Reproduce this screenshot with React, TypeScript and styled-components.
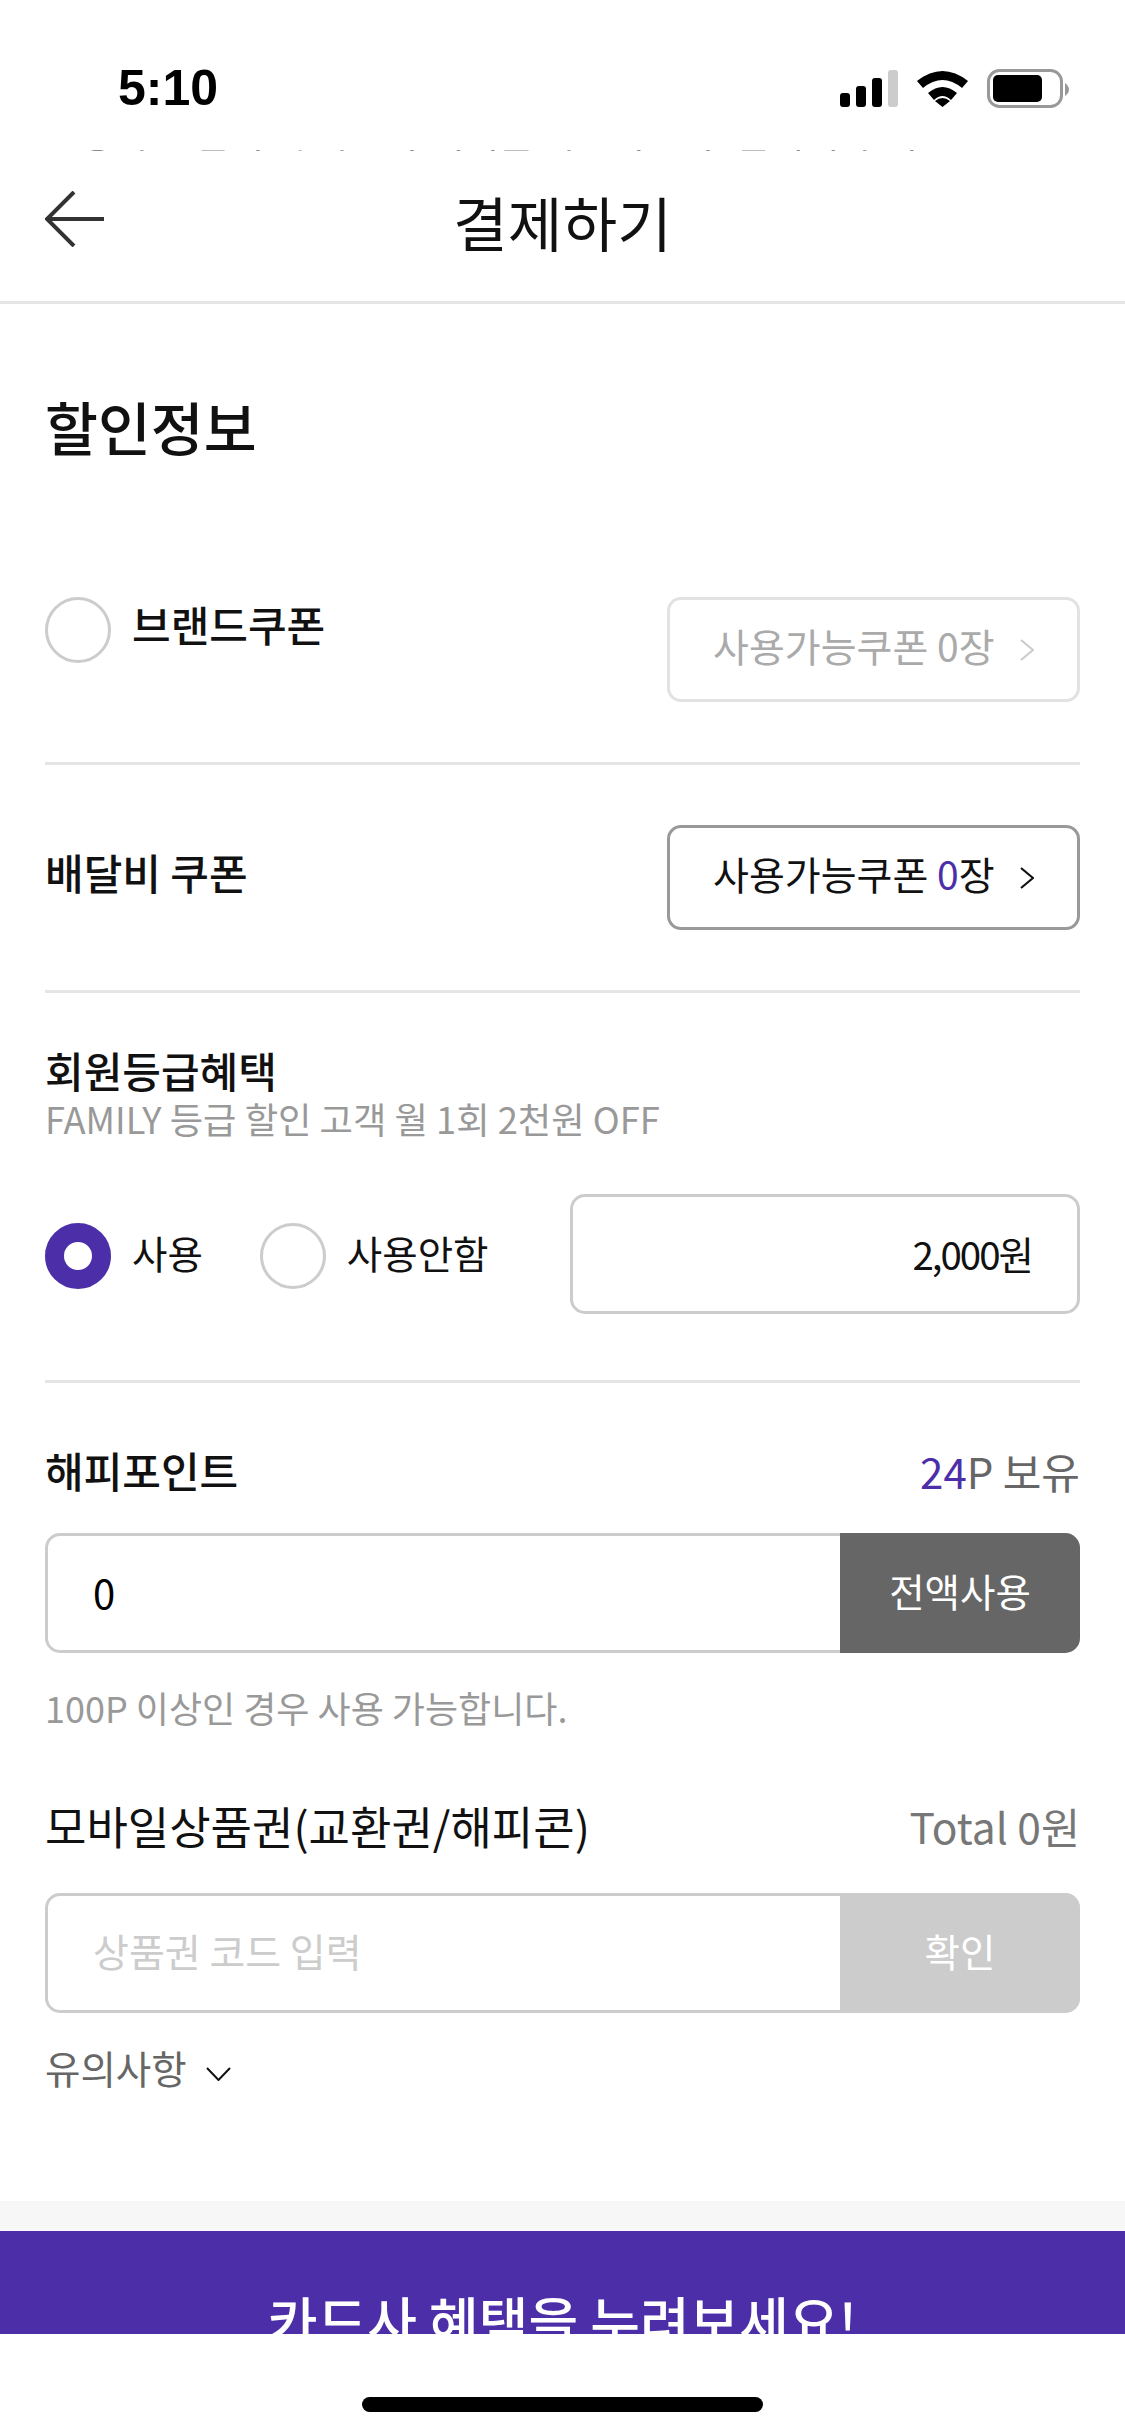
import React from "react";
import styled, { createGlobalStyle } from "styled-components";

const purple = "#4c2fa8";
const kr = `"Noto Sans CJK KR", "Noto Sans", sans-serif`;

const Reset = createGlobalStyle`
  html, body { margin: 0; padding: 0; background: #fff; }
  * { box-sizing: border-box; }
`;

const Screen = styled.div`
  width: 1125px;
  height: 2436px;
  overflow: hidden;
  background: #fff;
  display: flex;
  flex-direction: column;
  font-family: ${kr};
  color: #111;
`;

const StatusBar = styled.div`
  height: 150px;
  padding: 62px 56px 0 118px;
  display: flex;
  justify-content: space-between;
  align-items: flex-start;
`;

const Clock = styled.div`
  font-family: "Liberation Sans", Arial, sans-serif;
  font-weight: 700;
  font-size: 50px;
  line-height: 52px;
  color: #000;
`;

const ScrollPeek = styled.div`
  height: 2px;
  padding: 0 45px;
  overflow: hidden;
  display: flex;
  align-items: flex-end;
  font-size: 38px;
  line-height: 42px;
  white-space: nowrap;
  color: #888;
`;

const HeaderBar = styled.header`
  height: 152px;
  padding: 0 45px;
  border-bottom: 3px solid #e5e5e5;
  display: grid;
  grid-template-columns: 1fr auto 1fr;
  align-items: center;
`;

const BackIcon = styled.svg`
  width: 59px;
  height: 56px;
  margin-bottom: 15px;
  display: block;
`;

const PageTitle = styled.h1`
  margin: 0;
  padding-bottom: 12px;
  font-size: 59.5px;
  line-height: 70px;
  font-weight: 400;
  color: #111;
`;

const Body = styled.main`
  padding: 96px 45px 106px 45px;
  display: flex;
  flex-direction: column;
`;

const SectionTitle = styled.h2`
  margin: 0 0 137px;
  padding-bottom: 8px;
  font-size: 57.5px;
  line-height: 52px;
  font-weight: 500;
`;

const Divider = styled.div`
  height: 3px;
  background: #e5e5e5;
`;

const CouponRow = styled.div<{ $top?: boolean }>`
  height: 105px;
  margin: ${(p) => (p.$top ? "0 0 60px" : "60px 0")};
  display: flex;
  justify-content: space-between;
  align-items: ${(p) => (p.$top ? "flex-start" : "center")};
`;

const RadioLabel = styled.label`
  display: flex;
  align-items: center;
  gap: 21px;
`;

const Radio = styled.span<{ $checked?: boolean }>`
  width: 66px;
  height: 66px;
  flex: none;
  border-radius: 50%;
  background: #fff;
  border: ${(p) => (p.$checked ? `19px solid ${purple}` : "3px solid #ccc")};
`;

const Label = styled.span<{ $lift?: number }>`
  font-size: 42px;
  line-height: ${(p) => 60 - 2 * (p.$lift ?? 6)}px;
  padding-bottom: ${(p) => 2 * (p.$lift ?? 6)}px;
  font-weight: 500;
  color: #111;
`;

const RadioText = styled.span`
  font-size: 38.5px;
  line-height: 52px;
  padding-bottom: 8px;
  color: #111;
`;

const CouponButton = styled.div<{ $disabled?: boolean }>`
  width: 413px;
  height: 105px;
  padding: 0 43px 0 43px;
  border: 3px solid ${(p) => (p.$disabled ? "#e2e2e2" : "#999")};
  border-radius: 14px;
  display: flex;
  justify-content: space-between;
  align-items: center;
  font-size: 39px;
  color: ${(p) => (p.$disabled ? "#aaa" : "#111")};
`;

const CouponText = styled.span`
  padding-bottom: 9px;
  line-height: 50px;
`;

const Accent = styled.span`
  color: ${purple};
`;

const Chevron = styled.svg`
  width: 14px;
  height: 22px;
  flex: none;
`;

const GradeTitle = styled.div`
  margin-top: 55px;
  padding-bottom: 6px;
  font-size: 42px;
  line-height: 44px;
  font-weight: 500;
`;

const GradeNote = styled.div`
  padding-bottom: 6px;
  font-size: 36.3px;
  line-height: 40px;
  color: #999;
`;

const GradeRow = styled.div`
  height: 120px;
  margin: 50px 0 66px;
  display: flex;
  align-items: center;
  justify-content: space-between;
`;

const RadioGroup = styled.div`
  margin-top: 4px;
  display: flex;
  gap: 57px;
`;

const AmountBox = styled.div`
  width: 510px;
  height: 120px;
  padding: 0 45px 2px 0;
  border: 3px solid #ccc;
  border-radius: 15px;
  display: flex;
  justify-content: flex-end;
  align-items: center;
  font-size: 38.5px;
  letter-spacing: -2px;
  color: #111;
`;

const SplitHead = styled.div<{ $gap: string }>`
  margin: ${(p) => p.$gap};
  display: flex;
  justify-content: space-between;
  align-items: center;
  height: 60px;
`;

const PointBalance = styled.span`
  padding-bottom: 4px;
  font-size: 42px;
  color: #666;
`;

const VoucherTitle = styled.span`
  padding-bottom: 6px;
  font-size: 45px;
  color: #111;
`;

const TotalText = styled.span`
  padding-bottom: 6px;
  font-size: 42.5px;
  color: #777;
`;

const FieldGroup = styled.div`
  height: 120px;
  border: 3px solid #ccc;
  border-radius: 15px;
  display: flex;
`;

const FieldValue = styled.div<{ $placeholder?: boolean }>`
  flex: 1;
  padding: 0 0 ${(p) => (p.$placeholder ? "6px" : "3px")} 45px;
  display: flex;
  align-items: center;
  font-size: ${(p) => (p.$placeholder ? "39px" : "40px")};
  color: ${(p) => (p.$placeholder ? "#ccc" : "#000")};
`;

/* The button sits over the group's border and takes its right-hand corners */
const FieldButton = styled.div<{ $muted?: boolean }>`
  width: 240px;
  margin: -3px -3px -3px 0;
  padding-bottom: 6px;
  border-radius: 0 15px 15px 0;
  display: flex;
  justify-content: center;
  align-items: center;
  font-size: 38.5px;
  color: #fff;
  background: ${(p) => (p.$muted ? "#ccc" : "#666")};
`;

const HintText = styled.div`
  margin: 33px 0 66px;
  padding-bottom: 4px;
  font-size: 36px;
  line-height: 42px;
  color: #999;
`;

const NoticeToggle = styled.div`
  margin-top: 32px;
  padding-bottom: 6px;
  display: flex;
  align-items: center;
  gap: 19px;
  font-size: 38.5px;
  line-height: 44px;
  color: #666;
`;

const ChevronDown = styled.svg`
  width: 25px;
  height: 14px;
  margin-top: 14px;
`;

const Band = styled.div`
  height: 30px;
  background: #f7f7f7;
`;

const CardPromo = styled.section`
  height: 103px;
  overflow: hidden;
  padding-top: 54px;
  background: ${purple};
  color: #fff;
  text-align: center;
  font-size: 54px;
  line-height: 70px;
  font-weight: 500;
`;

const HomeArea = styled.div`
  flex: 1;
  padding-top: 63px;
  display: flex;
  justify-content: center;
  align-items: flex-start;
`;

const HomeBar = styled.div`
  width: 401px;
  height: 15px;
  border-radius: 8px;
  background: #000;
`;

const StatusIcons = () => (
  <svg width="232" height="42" viewBox="837 68 232 42" style={{ marginTop: 6 }}>
    <rect x="840" y="93" width="10" height="14" rx="3" fill="#000" />
    <rect x="856" y="86" width="10" height="21" rx="3" fill="#000" />
    <rect x="872" y="78" width="10" height="29" rx="3" fill="#000" />
    <rect x="888" y="70" width="10" height="37" rx="3" fill="#ccc" />
    <path
      d="M917 81 Q942.5 61 968 81 L962 88 Q942.5 72 923 88 Z M928 93 Q942.5 81 957 93 L951 100 Q942.5 92 934 100 Z M935 101 Q942.5 95 950 101 L942.5 107 Z"
      fill="#000"
    />
    <rect x="988.5" y="70.5" width="73" height="36" rx="11" fill="none" stroke="#999" strokeWidth="3" />
    <rect x="993" y="75" width="49" height="27" rx="5" fill="#000" />
    <path d="M1065 83 Q1069 86 1069 89.5 Q1069 93 1065 96 Z" fill="#999" />
  </svg>
);

const ChevronRight = ({ color }: { color: string }) => (
  <Chevron viewBox="0 0 14 22">
    <path d="M1 1 L13 11 L1 21" fill="none" stroke={color} strokeWidth="2.2" />
  </Chevron>
);

export default function App() {
  return (
    <Screen>
      <Reset />
      <StatusBar>
        <Clock>5:10</Clock>
        <StatusIcons />
      </StatusBar>
      <ScrollPeek>신용카드 결제 시 카드사 혜택을 확인하신 후 결제해 주세요</ScrollPeek>
      <HeaderBar>
        <BackIcon viewBox="0 0 59 56">
          <path d="M29 1 L2 28 L29 55 M2 28 H59" fill="none" stroke="#333" strokeWidth="4" />
        </BackIcon>
        <PageTitle>결제하기</PageTitle>
      </HeaderBar>
      <Body>
        <SectionTitle>할인정보</SectionTitle>
        <CouponRow $top>
          <RadioLabel>
            <Radio />
            <Label>브랜드쿠폰</Label>
          </RadioLabel>
          <CouponButton $disabled>
            <CouponText>사용가능쿠폰 0장</CouponText>
            <ChevronRight color="#ccc" />
          </CouponButton>
        </CouponRow>
        <Divider />
        <CouponRow>
          <Label>배달비 쿠폰</Label>
          <CouponButton>
            <CouponText>
              사용가능쿠폰 <Accent>0</Accent>장
            </CouponText>
            <ChevronRight color="#111" />
          </CouponButton>
        </CouponRow>
        <Divider />
        <GradeTitle>회원등급혜택</GradeTitle>
        <GradeNote>FAMILY 등급 할인 고객 월 1회 2천원 OFF</GradeNote>
        <GradeRow>
          <RadioGroup>
            <RadioLabel>
              <Radio $checked />
              <RadioText>사용</RadioText>
            </RadioLabel>
            <RadioLabel>
              <Radio />
              <RadioText>사용안함</RadioText>
            </RadioLabel>
          </RadioGroup>
          <AmountBox>2,000원</AmountBox>
        </GradeRow>
        <Divider />
        <SplitHead $gap="59px 0 31px">
          <Label $lift={2}>해피포인트</Label>
          <PointBalance>
            <Accent>24</Accent>P 보유
          </PointBalance>
        </SplitHead>
        <FieldGroup>
          <FieldValue>0</FieldValue>
          <FieldButton>전액사용</FieldButton>
        </FieldGroup>
        <HintText>100P 이상인 경우 사용 가능합니다.</HintText>
        <SplitHead $gap="0 0 35px">
          <VoucherTitle>모바일상품권(교환권/해피콘)</VoucherTitle>
          <TotalText>Total 0원</TotalText>
        </SplitHead>
        <FieldGroup>
          <FieldValue $placeholder>상품권 코드 입력</FieldValue>
          <FieldButton $muted>확인</FieldButton>
        </FieldGroup>
        <NoticeToggle>
          유의사항
          <ChevronDown viewBox="0 0 25 14">
            <path d="M1 1 L12.5 13 L24 1" fill="none" stroke="#111" strokeWidth="2" />
          </ChevronDown>
        </NoticeToggle>
      </Body>
      <Band />
      <CardPromo>카드사 혜택을 누려보세요!</CardPromo>
      <HomeArea>
        <HomeBar />
      </HomeArea>
    </Screen>
  );
}
